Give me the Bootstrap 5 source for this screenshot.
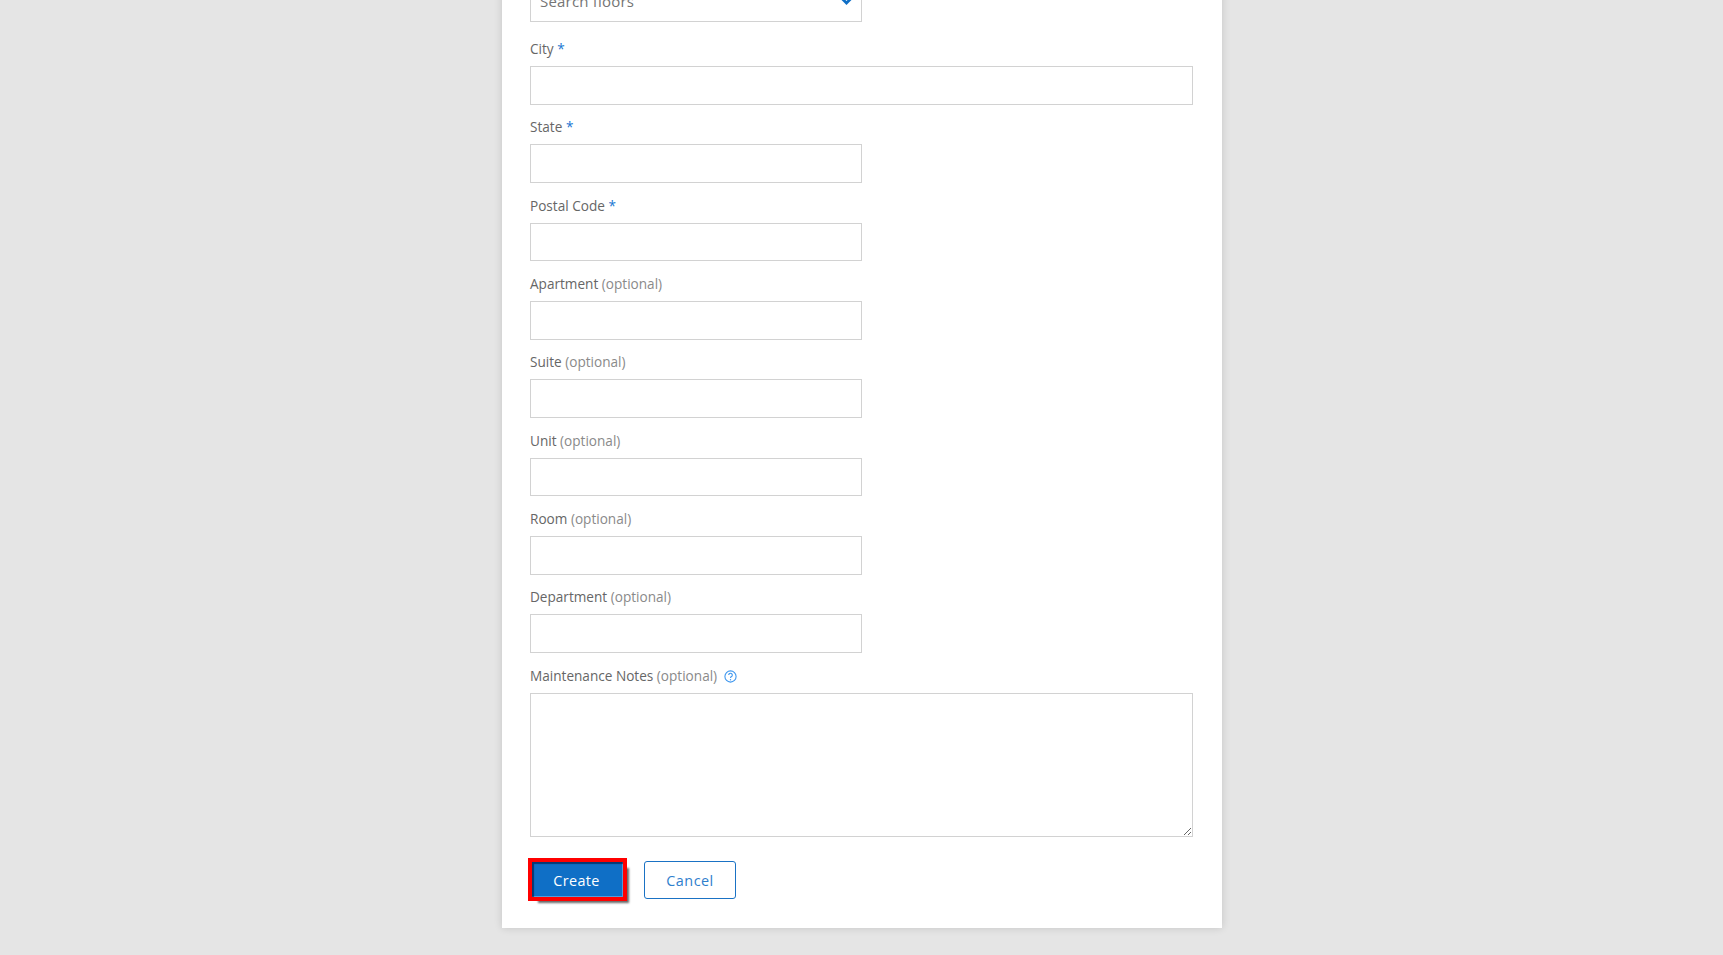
<!DOCTYPE html>
<html lang="en"><head><meta charset="utf-8">
<link href="https://cdn.jsdelivr.net/npm/bootstrap@5.3.0/dist/css/bootstrap.min.css" rel="stylesheet">
<style>
html,body{height:100%;overflow:hidden}
body{background:#e5e5e5;font-family:"Open Sans",sans-serif;font-size:13.6px;color:#666}
.page-wrap{height:955px;padding-bottom:27px;padding-left:1px}
.form-panel{width:720px;background:#fff;padding:0 29px 29px 28px;box-shadow:0 0 8px rgba(0,0,0,.14)}
.fld{margin-bottom:13.575px}
.fld-first{margin-bottom:18px}
.fld-last{margin-bottom:23.3px}
.fld-label{display:block;font-size:13.6px;line-height:18px;margin-bottom:8px;color:#666}
.opt{color:#8a8a8a}
.req{color:#1976d2}
.fld-input{display:block;height:38.8px;border:1px solid #d2d2d2;border-radius:0;padding:0 9px;font-size:14px;background:#fff;color:#666}
.w-half{width:332px}
.w-whole{width:663px}
.fld-select{position:relative;font-size:15px;line-height:35px;color:#757575;letter-spacing:.2px}
.sel-arrow{position:absolute;right:9px;top:13px}
textarea.fld-input{height:144px;resize:both}
.btn-create{background:#0f6fc6;color:#fff;border:0;width:91px;height:35px;font-size:14.4px;letter-spacing:.4px;border-radius:0;padding:3px 2px 0 0;outline:4px solid #f00;outline-offset:0;box-shadow:6px 6px 2px rgba(0,0,0,.6),inset 2px 2px 1px rgba(0,20,60,.6),inset -1px -1px 0 rgba(255,255,255,.3);margin:2px 0 0 2px}
.btn-cancel{background:#fff;color:#2f80cd;border:1px solid #1a72c4;width:92px;height:38px;font-size:14.4px;letter-spacing:.5px;border-radius:3px;padding:1px 0 0;margin:1px 0 0 5px}
.help-ic{margin-left:7px;vertical-align:-2px}
</style></head>
<body>
<div class="page-wrap d-flex flex-column justify-content-end align-items-center">
<form class="form-panel">
<div class="fld fld-first"><div class="fld-input fld-select w-half">Search floors<svg class="sel-arrow" width="11" height="8" viewBox="0 0 11 8"><path d="M1 1.5 5.5 6 10 1.5" fill="none" stroke="#0f6fc6" stroke-width="2.8"/></svg></div></div>
<div class="fld"><label class="fld-label">City <span class="req">*</span></label><input class="fld-input w-whole"></div>
<div class="fld"><label class="fld-label">State <span class="req">*</span></label><input class="fld-input w-half"></div>
<div class="fld"><label class="fld-label">Postal Code <span class="req">*</span></label><input class="fld-input w-half"></div>
<div class="fld"><label class="fld-label">Apartment <span class="opt">(optional)</span></label><input class="fld-input w-half"></div>
<div class="fld"><label class="fld-label">Suite <span class="opt">(optional)</span></label><input class="fld-input w-half"></div>
<div class="fld"><label class="fld-label">Unit <span class="opt">(optional)</span></label><input class="fld-input w-half"></div>
<div class="fld"><label class="fld-label">Room <span class="opt">(optional)</span></label><input class="fld-input w-half"></div>
<div class="fld"><label class="fld-label">Department <span class="opt">(optional)</span></label><input class="fld-input w-half"></div>
<div class="fld fld-last"><label class="fld-label">Maintenance Notes <span class="opt">(optional)</span><svg class="help-ic" width="13" height="13" viewBox="0 0 13 13"><circle cx="6.5" cy="6.5" r="5.6" fill="none" stroke="#3f97ee" stroke-width="1.1"/><path d="M4.7 5.1a1.8 1.8 0 1 1 2.8 1.5c-.7.4-1 .8-1 1.5" fill="none" stroke="#3f97ee" stroke-width="1.1"/><circle cx="6.5" cy="9.8" r=".7" fill="#3f97ee"/></svg></label><textarea class="fld-input w-whole"></textarea></div>
<div class="d-flex align-items-start gap-3"><button type="button" class="btn btn-create">Create</button><button type="button" class="btn btn-cancel">Cancel</button></div>
</form>
</div>
</body></html>
